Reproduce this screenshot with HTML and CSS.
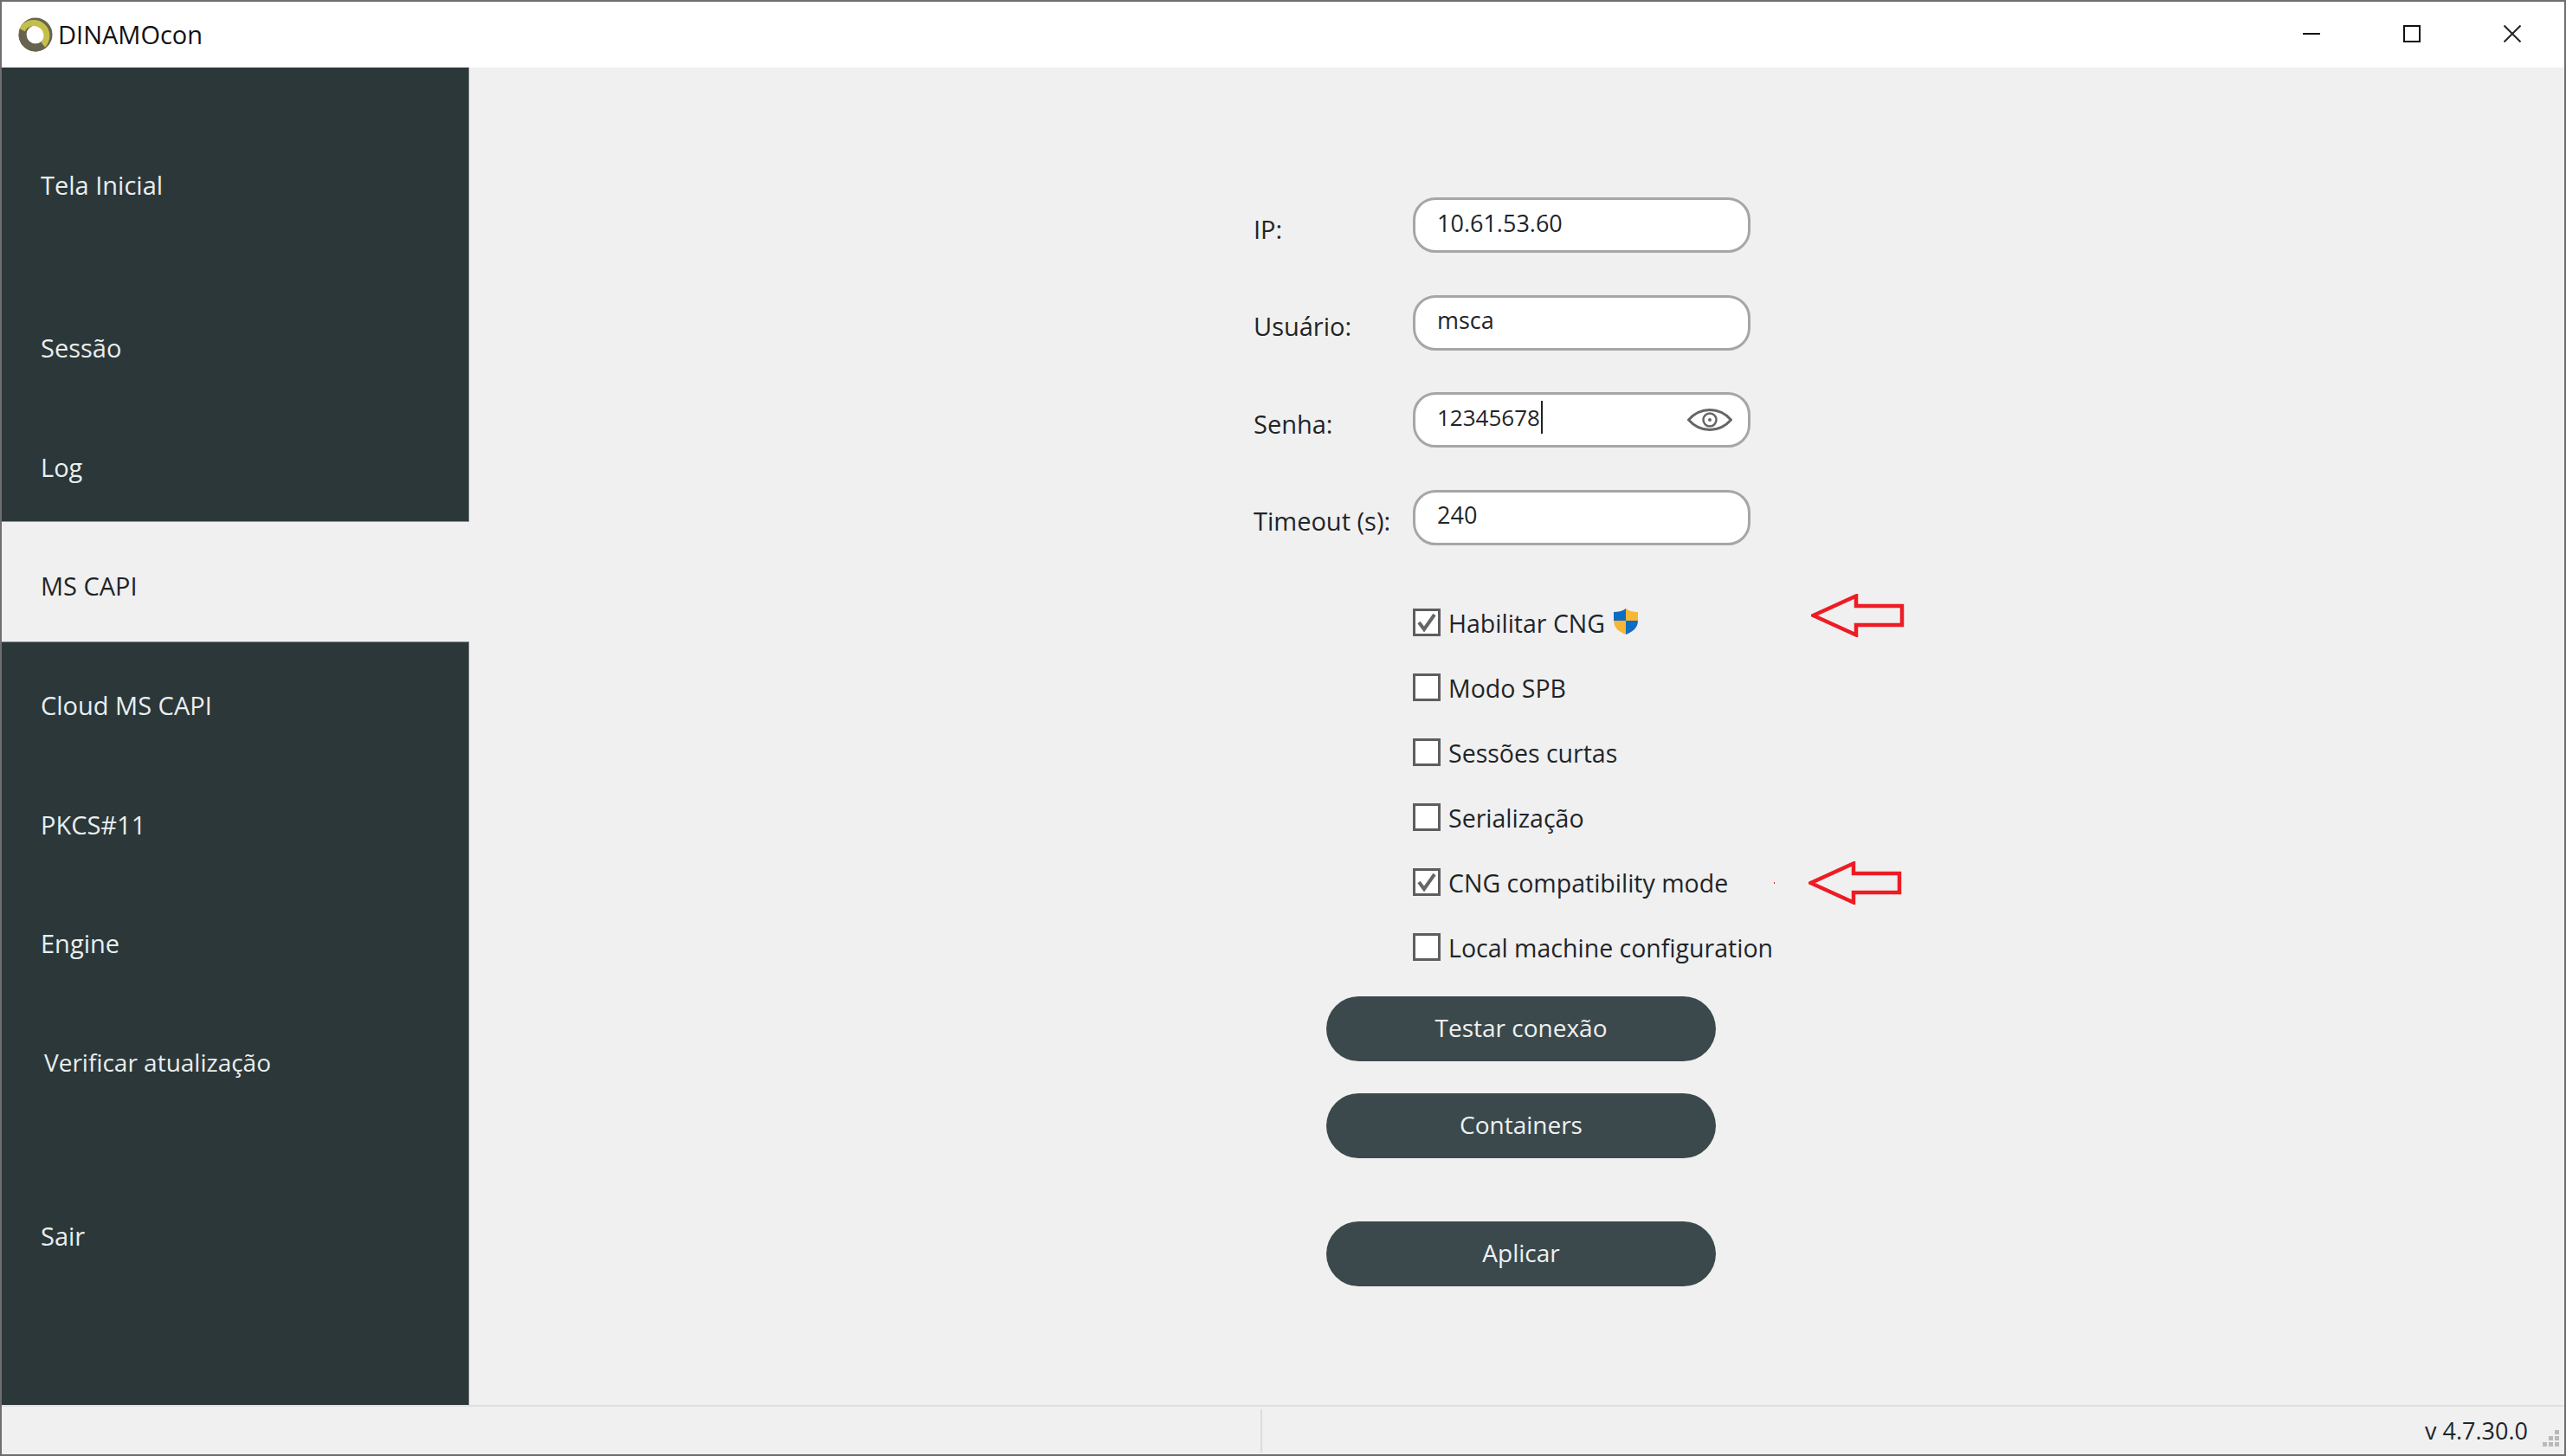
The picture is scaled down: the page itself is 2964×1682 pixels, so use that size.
FILE: index.html
```html
<!DOCTYPE html>
<html lang="en">
<head>
<meta charset="UTF-8" />
<title>DINAMOcon</title>
<link rel="stylesheet" href="styles.css">
</head>
<body>
<div class="window">
  <header class="titlebar">
    <div class="app-title">
      <svg class="logo" viewBox="0 0 40 40" aria-hidden="true">
        <circle cx="20" cy="20" r="15" fill="none" stroke="#66644f" stroke-width="9" />
        <path d="M4.6 14.6A15 15 0 1 1 27.5 33" fill="none" stroke="#c4bf4a" stroke-width="7" />
        <path d="M5 20A15 15 0 0 0 29 32" fill="none" stroke="#66644f" stroke-width="9" />
      </svg>
      <span>DINAMOcon</span>
    </div>
    <div class="win-controls">
      <div class="win-btn"><span class="min-icon"></span></div>
      <div class="win-btn"><span class="max-icon"></span></div>
      <div class="win-btn">
        <svg class="close-icon" viewBox="0 0 20 20" aria-hidden="true"><path d="M0.5 0.5L19.5 19.5M19.5 0.5L0.5 19.5" stroke="#222" stroke-width="2" /></svg>
      </div>
    </div>
  </header>

  <div class="app-body">
    <nav class="sidebar">
      <div class="nav-item nav-first">Tela Inicial</div>
      <div class="nav-item">Sessão</div>
      <div class="nav-item">Log</div>
      <div class="nav-item active">MS CAPI</div>
      <div class="nav-item">Cloud MS CAPI</div>
      <div class="nav-item">PKCS#11</div>
      <div class="nav-item">Engine</div>
      <div class="nav-item nav-update">Verificar atualização</div>
      <div class="nav-item nav-exit">Sair</div>
    </nav>

    <main class="content">
      <div class="form-panel">
        <div class="field-row">
          <label class="field-label">IP:</label>
          <div class="field"><span class="field-value">10.61.53.60</span></div>
        </div>
        <div class="field-row">
          <label class="field-label">Usuário:</label>
          <div class="field"><span class="field-value">msca</span></div>
        </div>
        <div class="field-row">
          <label class="field-label">Senha:</label>
          <div class="field">
            <span class="field-value caret">12345678</span>
            <svg class="eye" viewBox="0 0 52 26" aria-hidden="true">
              <path d="M1.5 13C9 4.5 17 1.5 26 1.5S43 4.500 50.500 13C43 21.500 35 24.500 26 24.500S9 21.500 1.500 13Z" fill="none" stroke="#666" stroke-width="3" />
              <circle cx="26" cy="13" r="7.500" fill="none" stroke="#666" stroke-width="2.500" />
              <circle cx="26" cy="13" r="2" fill="#666" />
            </svg>
          </div>
        </div>
        <div class="field-row">
          <label class="field-label">Timeout (s):</label>
          <div class="field"><span class="field-value">240</span></div>
        </div>

        <div class="check-list">
          <div class="check-row">
            <div class="checkbox"><svg viewBox="0 0 26 26" aria-hidden="true"><path d="M4 13L10 21L22 4" fill="none" stroke="#666" stroke-width="4" /></svg></div>
            <span>Habilitar CNG</span>
            <svg class="shield" viewBox="0 0 28 30" aria-hidden="true">
              <path d="M14 0C10 3 5 4 0 4V14H14Z" fill="#0f6cc4" />
              <path d="M14 0C18 3 23 4 28 4V14H14Z" fill="#f7b733" />
              <path d="M0 14C0 22 6 27 14 30V14Z" fill="#f7b733" />
              <path d="M28 14C28 22 22 27 14 30V14Z" fill="#0f6cc4" />
            </svg>
            <svg class="arrow arrow-one" viewBox="0 0 108 50" aria-hidden="true"><path d="M2.500 25L52 2.500V14H105V36H52V47.500Z" fill="none" stroke="#ed1c24" stroke-width="4.500" /></svg>
          </div>
          <div class="check-row">
            <div class="checkbox"></div>
            <span>Modo SPB</span>
          </div>
          <div class="check-row">
            <div class="checkbox"></div>
            <span>Sessões curtas</span>
          </div>
          <div class="check-row">
            <div class="checkbox"></div>
            <span>Serialização</span>
          </div>
          <div class="check-row">
            <div class="checkbox"><svg viewBox="0 0 26 26" aria-hidden="true"><path d="M4 13L10 21L22 4" fill="none" stroke="#666" stroke-width="4" /></svg></div>
            <span>CNG compatibility mode</span>
            <i class="stray-dot"></i>
            <svg class="arrow arrow-two" viewBox="0 0 108 50" aria-hidden="true"><path d="M2.500 25L52 2.500V14H105V36H52V47.500Z" fill="none" stroke="#ed1c24" stroke-width="4.500" /></svg>
          </div>
          <div class="check-row">
            <div class="checkbox"></div>
            <span>Local machine configuration</span>
          </div>
        </div>

        <div class="actions">
          <button class="pill-btn">Testar conexão</button>
          <button class="pill-btn">Containers</button>
          <button class="pill-btn apply-btn">Aplicar</button>
        </div>
      </div>
    </main>
  </div>

  <footer class="statusbar">
    <div class="status-left"></div>
    <div class="status-right">
      <span class="version">v 4.7.30.0</span>
      <svg class="grip" viewBox="0 0 20 20" aria-hidden="true">
        <path d="M14 0h5v5h-5zM7 7h5v5H7zM14 7h5v5h-5zM0 14h5v5H0zM7 14h5v5H7zM14 14h5v5h-5z" fill="#b9b9b9" />
      </svg>
    </div>
  </footer>
</div>
</body>
</html>
```

FILE: styles.css
```css
* {
  box-sizing: border-box;
}
html, body {
  margin: 0;
  height: 100%;
}
body {
  font-family: "Open Sans", "Noto Sans", sans-serif;
  font-size: 29px;
  color: #1f2528;
  background: #f0f0f0;
}
.window {
  position: relative;
  height: 1682px;
  display: flex;
  flex-direction: column;
  border: 2px solid #6e6e6e;
  overflow: hidden;
}

/* title bar */
.titlebar {
  height: 76px;
  flex: none;
  background: #fff;
  display: flex;
  justify-content: space-between;
  align-items: center;
}
.app-title {
  display: flex;
  align-items: center;
  gap: 6px;
  padding-left: 19px;
  color: #111;
  font-size: 29px;
}
.app-title span {
  margin-top: -2px;
}
.logo {
  width: 40px;
  height: 40px;
}
.win-controls {
  display: flex;
  height: 100%;
  margin-right: 2px;
}
.win-btn {
  width: 116px;
  display: flex;
  align-items: center;
  justify-content: center;
  padding-bottom: 2px;
}
.min-icon {
  width: 20px;
  height: 2px;
  background: #111;
}
.max-icon {
  width: 20px;
  height: 20px;
  border: 2px solid #111;
}
.close-icon {
  width: 20px;
  height: 20px;
}

.app-body {
  flex: 1;
  display: flex;
  min-height: 0;
}

/* left menu */
.sidebar {
  width: 540px;
  flex: none;
  background: #2c3739;
  border-right: 1px solid #6f7b7d;
  color: #e9eeee;
}
.nav-item {
  height: 137.700px;
  display: flex;
  align-items: center;
  padding: 9px 0 0 45px;
}
.nav-first {
  height: 250px;
  padding-top: 20px;
}
.nav-update {
  padding-left: 49px;
  font-size: 28px;
}
.nav-exit {
  margin-top: 62px;
}
.active {
  background: #f0f0f0;
  color: #1f2528;
  box-shadow: 0 -1px 0 #8a9496, 0 1px 0 #8a9496;
  margin-right: -1px;
}

/* form */
.content {
  flex: 1;
  padding: 150px 0 0 906px;
}
.form-panel {
  width: 500px;
}
.field-row {
  display: flex;
  height: 64px;
  margin-bottom: 48.500px;
}
.field-label {
  width: 184px;
  flex: none;
  display: flex;
  align-items: center;
  padding-top: 8px;
}
.field {
  width: 390px;
  flex: none;
  display: flex;
  align-items: center;
  justify-content: space-between;
  padding: 0 18px 0 25px;
  background: #fff;
  border: 3px solid #a6a6a6;
  border-radius: 26px;
}
.field-value {
  margin-top: -6px;
  font-size: 27px;
}
.caret {
  border-right: 2px solid #222;
  line-height: 38px;
  padding-right: 1px;
  font-size: 26px;
}
.eye {
  width: 52px;
  height: 26px;
}

.check-list {
  margin-left: 184px;
  padding-top: 25px;
}
.check-row {
  position: relative;
  height: 75px;
  display: flex;
  align-items: flex-start;
  gap: 9px;
  white-space: nowrap;
  font-size: 28.500px;
}
.check-row span {
  line-height: 34px;
}
.checkbox {
  width: 32px;
  height: 32px;
  flex: none;
  background: #fff;
  border: 3px solid #5e5e5e;
}
.checkbox svg {
  display: block;
  width: 26px;
  height: 26px;
}
.shield {
  width: 28px;
  height: 30px;
  margin-left: 1px;
}
.arrow {
  position: absolute;
  width: 108px;
  height: 50px;
}
.arrow-one {
  left: 460px;
  top: -17px;
}
.arrow-two {
  left: 457px;
  top: -8px;
}
.stray-dot {
  position: absolute;
  left: 417px;
  top: 16px;
  width: 1px;
  height: 2px;
  background: #ed1c24;
}

.actions {
  margin: -2px 0 0 84px;
  display: flex;
  flex-direction: column;
  gap: 37px;
}
.pill-btn {
  width: 450px;
  height: 75px;
  border: none;
  border-radius: 38px;
  background: #3c494c;
  color: #eef1f1;
  font: inherit;
  font-size: 28px;
  padding: 0 0 4px;
}
.apply-btn {
  margin-top: 36px;
}

/* status bar */
.statusbar {
  height: 57px;
  flex: none;
  display: flex;
  border-top: 2px solid #dedede;
}
.status-left {
  width: 1456px;
  margin: 3px 0 2px;
  border-right: 2px solid #dcdcdc;
}
.status-right {
  flex: 1;
  display: flex;
  justify-content: flex-end;
  align-items: center;
  padding-right: 5px;
  font-size: 27px;
}
.version {
  margin-right: 2px;
}
.grip {
  width: 20px;
  height: 20px;
  margin: 18px 0 0 15px;
}
```
